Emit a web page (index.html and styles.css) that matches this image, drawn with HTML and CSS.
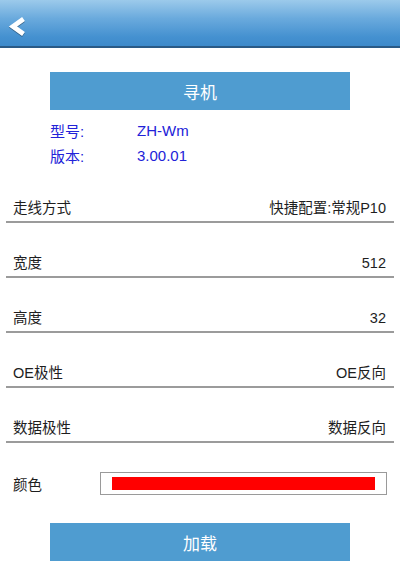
FILE: index.html
```html
<!DOCTYPE html>
<html>
<head>
<meta charset="utf-8">
<link rel="stylesheet" href="styles.css">
</head>
<body>
<header class="nav">
  <svg class="back" width="20" height="22" viewBox="0 0 20 22">
    <polyline points="15.5,3 5,10.5 15.5,18" fill="none" stroke="#fff" stroke-width="4.8" stroke-linejoin="miter" stroke-linecap="butt"/>
  </svg>
</header>
<main class="page">
  <div class="btn">寻机</div>
  <div class="info">
    <div class="info-row"><span class="info-key">型号:</span><span>ZH-Wm</span></div>
    <div class="info-row"><span class="info-key">版本:</span><span>3.00.01</span></div>
  </div>
  <div class="rows">
    <div class="row"><span>走线方式</span><span class="val">快捷配置:常规P10</span></div>
    <div class="row"><span>宽度</span><span>512</span></div>
    <div class="row"><span>高度</span><span>32</span></div>
    <div class="row"><span>OE极性</span><span>OE反向</span></div>
    <div class="row"><span>数据极性</span><span>数据反向</span></div>
  </div>
  <div class="color-row">
    <span class="color-label">颜色</span>
    <div class="color-box"><div class="color-bar"></div></div>
  </div>
  <div class="btn btn-load">加载</div>
</main>
</body>
</html>
```

FILE: styles.css
```css
html, body {
  margin: 0;
  padding: 0;
  background: #fff;
  font-family: "Liberation Sans", "Noto Sans CJK SC", sans-serif;
}

.nav {
  height: 46px;
  background: linear-gradient(to bottom, #9ccaeb 0%, #6aaadd 40%, #4591d0 80%, #3d8acb 100%);
  border-bottom: 2px solid #2a5a86;
  display: flex;
  align-items: center;
  padding-left: 8px;
}

.back {
  display: block;
  margin-top: 8px;
  filter: drop-shadow(0 1px 0 rgba(0, 0, 0, 0.35));
}

.page {
  display: flex;
  flex-direction: column;
}

.btn {
  margin: 24px 0 0 50px;
  width: 300px;
  height: 38px;
  background: #4f9cd0;
  color: #fff;
  font-size: 17px;
  display: flex;
  align-items: center;
  justify-content: center;
}

.info {
  margin: 8px 0 0 50px;
  color: #2222d8;
  font-size: 15px;
}

.info-row {
  height: 25px;
  display: flex;
  align-items: center;
}

.info-key {
  width: 87px;
}

.rows {
  margin: 0 6px;
}

.row {
  height: 53px;
  border-bottom: 2px solid #9b9b9b;
  display: flex;
  justify-content: space-between;
  align-items: flex-end;
  padding: 0 8px 0 7px;
  box-sizing: content-box;
  font-size: 14.5px;
  color: #1e1e1e;
}

.row span {
  line-height: 18px;
  padding-bottom: 4px;
}

.color-row {
  display: flex;
  align-items: center;
  margin: 29px 0 0 13px;
  font-size: 14.5px;
  color: #1e1e1e;
}

.color-label {
  width: 87px;
}

.color-box {
  width: 263px;
  height: 13px;
  padding: 4px 11px;
  border: 1.5px solid #9a9a9a;
  display: flex;
}

.color-bar {
  flex: 1;
  background: #ff0000;
}

.btn-load {
  margin-top: 28px;
}
```
